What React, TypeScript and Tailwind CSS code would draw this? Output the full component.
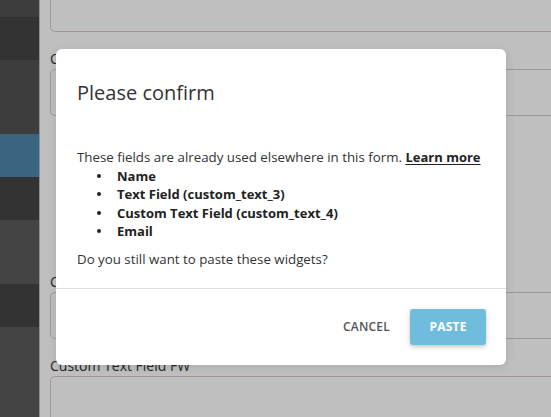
import type { ReactNode } from 'react';

const SIDEBAR_BANDS: { h: string; bg: string }[] = [
  { h: 'h-[17px]', bg: 'bg-[#3d3d3d]' },
  { h: 'h-[43px]', bg: 'bg-[#333333]' },
  { h: 'h-[74px]', bg: 'bg-[#3d3d3d]' },
  { h: 'h-[43px]', bg: 'bg-[#3a6581]' },
  { h: 'h-[43px]', bg: 'bg-[#333333]' },
  { h: 'h-[64px]', bg: 'bg-[#444444]' },
  { h: 'h-[43px]', bg: 'bg-[#333333]' },
  { h: 'h-[90px]', bg: 'bg-[#444444]' },
];

function Field({ label, className }: { label?: string; className?: string }) {
  return (
    <div className={className}>
      {label ? (
        <div className="h-[37px] pt-[17px] text-[14px] leading-[20px] text-[#262626]">{label}</div>
      ) : null}
      <div className="h-[47px] w-[540px] rounded-[5px] border border-[#a09696] bg-[#bfbfbf]" />
    </div>
  );
}

function Item({ children }: { children: ReactNode }) {
  return (
    <li className="flex items-center text-[13px] font-bold text-[#222]">
      <span className="mr-[16px] h-[4px] w-[4px] shrink-0 rounded-full bg-[#222]" />
      {children}
    </li>
  );
}

export default function App() {
  const fields = ['Name', 'Text Field (custom_text_3)', 'Custom Text Field (custom_text_4)', 'Email'];

  return (
    <div className="relative flex h-[417px] w-full overflow-hidden bg-[#bfbfbf] font-['Open_Sans',sans-serif]">
      <aside className="flex w-[40px] shrink-0 flex-col border-r border-[#8f8f8f]">
        {SIDEBAR_BANDS.map((b, i) => (
          <div key={i} className={`${b.h} ${b.bg} shrink-0`} />
        ))}
      </aside>

      <main className="flex-1 pl-[10px]">
        <Field className="-mt-[15px]" />
        <Field label="Custom Text Field" />
        <div className="h-[139px]" />
        <Field label="Custom Text Field" />
        <Field label="Custom Text Field FW" />
      </main>

      {/* confirm dialog */}
      <div className="absolute left-[56px] top-[49px] w-[450px] rounded-[6px] bg-white shadow-[0_2px_10px_rgba(0,0,0,0.1)]">
        <h2 className="px-[21px] pt-[30px] text-[20px] leading-[28px] text-[#333]">Please confirm</h2>

        <div className="px-[21px] pb-[20px] pt-[41px] text-[13.3px] leading-[18.5px] text-[#333]">
          <p>
            These fields are already used elsewhere in this form.{' '}
            <a href="#" className="text-[13px] font-bold text-[#222] underline underline-offset-2">
              Learn more
            </a>
          </p>
          <ul className="pl-[20px]">
            {fields.map((f) => (
              <Item key={f}>{f}</Item>
            ))}
          </ul>
          <p className="mt-[9px]">Do you still want to paste these widgets?</p>
        </div>

        <div className="flex items-center justify-end gap-[4px] border-t border-[#dddddd] px-[20px] py-[20px]">
          <button
            type="button"
            className="h-[36px] px-[16px] text-[12px] font-semibold tracking-[0.2px] text-[#555]"
          >
            CANCEL
          </button>
          <button
            type="button"
            className="h-[36px] w-[76px] rounded-[3px] bg-[#70bcdd] text-[12px] font-bold tracking-[0.2px] text-white shadow-[0_2px_4px_rgba(0,0,0,0.22)]"
          >
            PASTE
          </button>
        </div>
      </div>
    </div>
  );
}
